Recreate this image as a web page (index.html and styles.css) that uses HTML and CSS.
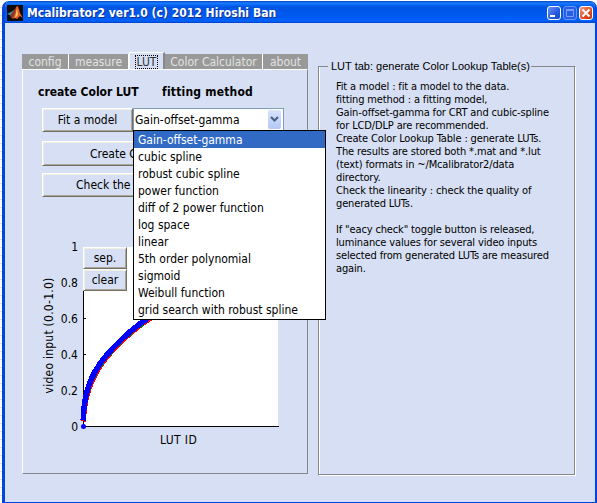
FILE: index.html
```html
<!DOCTYPE html>
<html lang="en">
<head>
<meta charset="utf-8">
<title>Mcalibrator2</title>
<link rel="stylesheet" href="styles.css">
</head>
<body>
<div class="window">
  <header class="titlebar">
    <svg class="logo" width="16" height="16" viewBox="0 0 16 16"><rect width="16" height="16" fill="#100b0b"/><path d="M0 9l4-2 3-2 2 4-4 4-2-3z" fill="#468cad"/><path d="M5 8l5-7-2 8-3 4-2-2z" fill="#8c3324"/><path d="M9 2l2-1 2 7 3 5-3-2-3 3-2-1-3 1 3-5z" fill="#e55b20"/><path d="M10 3l1 7-3 3 1-5z" fill="#ffc45a"/></svg>
    <h1 class="title">Mcalibrator2 ver1.0 (c) 2012 Hiroshi Ban</h1>
    <div class="controls">
      <span class="control"><svg width="12" height="12" viewBox="0 0 12 12"><path d="M2 9h5" stroke="#fff" stroke-width="2"/></svg></span>
      <span class="control disabled"><svg width="12" height="12" viewBox="0 0 12 12"><path d="M2.5 3.5h7v6h-7zM2 2.5h8" fill="none" stroke="#7d9ff3"/></svg></span>
      <span class="control close"><svg width="12" height="12" viewBox="0 0 12 12"><path d="M2.5 2.5l7 7m0-7l-7 7" stroke="#fff" stroke-width="2"/></svg></span>
    </div>
  </header>
  <main class="content">
    <section class="left">
      <nav class="tabs">
        <span class="tab config">config</span><span class="tab measure">measure</span><span class="tab active"><span class="focus">LUT</span></span><span class="tab calc">Color Calculator</span><span class="tab about">about</span>
      </nav>
      <div class="panel">
        <div class="headings"><b class="create">create Color LUT</b><b class="fitting">fitting method</b></div>
        <div class="model-row">
          <div class="button fit">Fit a model</div>
          <div class="combo">
            <span class="value">Gain-offset-gamma</span>
            <span class="arrow"><svg width="13" height="19" viewBox="0 0 13 19"><path d="M3 7l3.5 3.5L10 7" fill="none" stroke="#4d6185" stroke-width="2.2"/></svg></span>
            <ul class="menu">
              <li class="selected">Gain-offset-gamma</li>
              <li>cubic spline</li>
              <li>robust cubic spline</li>
              <li>power function</li>
              <li>diff of 2 power function</li>
              <li>log space</li>
              <li>linear</li>
              <li>5th order polynomial</li>
              <li>sigmoid</li>
              <li>Weibull function</li>
              <li>grid search with robust spline</li>
            </ul>
          </div>
        </div>
        <div class="button wide lut">Create C</div>
        <div class="button wide check">Check the</div>
        <div class="chart">
          <div class="ylabel"><span>video input (0.0-1.0)</span></div>
          <div class="yticks"><span>1</span><span>0.8</span><span>0.6</span><span>0.4</span><span>0.2</span><span>0</span></div>
          <div class="plot">
            <svg class="curve" width="202" height="186" viewBox="-4 -1 202 186">
              <rect x="0" y="0" width="195" height="179" fill="#fff"/>
              <path d="M.5 0v179.5H196M0 143.5h3M0 107.5h3M0 71.5h3M0 35.5h3" fill="none" stroke="#000"/>
              <g fill="none" shape-rendering="crispEdges">
                <path d="M.5 174.500C1.500 143 12 122 31.500 101.500C41.500 91 52.500 81 68.500 70.500" stroke="#f00" stroke-width="5"/>
                <path d="M.5 172C1.500 142 11.500 121 31.500 101C41.500 90.500 52.500 80.500 68.500 70.500" stroke="#008000" stroke-width="5" stroke-dasharray="5 9"/>
                <path d="M.2 173.500C.7 141 11 120 31 100C41 89.500 51.500 79.500 67.500 69.500" stroke="#00f" stroke-width="5.500"/>
              </g>
              <circle cx=".5" cy="179.500" r="2.500" fill="#00f"/>
            </svg>
            <div class="plot-buttons"><div class="button small">sep.</div><div class="button small">clear</div></div>
          </div>
        </div>
        <div class="xlabel">LUT ID</div>
      </div>
    </section>
    <fieldset class="help">
      <legend>LUT tab: generate Color Lookup Table(s)</legend>
      <div class="lines">
        <p>Fit a model : fit a model to the data.</p>
        <p>fitting method : a fitting model,</p>
        <p>Gain-offset-gamma for CRT and cubic-spline</p>
        <p>for LCD/DLP are recommended.</p>
        <p>Create Color Lookup Table : generate LUTs.</p>
        <p>The results are stored both *.mat and *.lut</p>
        <p>(text) formats in ~/Mcalibrator2/data</p>
        <p>directory.</p>
        <p>Check the linearity : check the quality of</p>
        <p>generated LUTs.</p>
        <p class="gap">If "eacy check" toggle button is released,</p>
        <p>luminance values for several video inputs</p>
        <p>selected from generated LUTs are measured</p>
        <p>again.</p>
      </div>
    </fieldset>
  </main>
</div>
</body>
</html>
```
FILE: styles.css
```css
* { box-sizing: border-box; }
body {
  margin: 0;
  height: 503px;
  padding: 1px 0 0 2px;
  overflow: hidden;
  background: repeating-linear-gradient(#fff 0 7px, #dfe1e8 7px 8px);
  font: 12px/17px "DejaVu Sans Condensed", "DejaVu Sans", sans-serif;
  font-stretch: condensed;
  color: #000;
  white-space: nowrap;
}
h1, p, ul { margin: 0; padding: 0; }
svg { display: block; }
.window {
  width: 595px;
  height: 502px;
  border: solid #0046e0;
  border-width: 0 2px 1px 3px;
  border-radius: 7px 7px 0 0;
  background: #d6dff3;
  overflow: hidden;
}
.titlebar {
  display: flex;
  align-items: center;
  height: 22px;
  margin: 0 -2px 0 -3px;
  padding: 2px 4px 0 5px;
  background: linear-gradient(#0842bd 0, #187cff 2px, #0054e3 6px, #005cf5 17px, #0061fc 20px, #0040c8 22px);
}
.title {
  margin-left: 4px;
  color: #fff;
  font-size: 12px;
  line-height: 18px;
  text-shadow: 1px 1px #10318f;
  letter-spacing: .03px;
}
.controls { display: flex; gap: 2px; margin-left: auto; }
.control {
  width: 14px;
  height: 14px;
  border: 1px solid #fff;
  border-radius: 3px;
  background: linear-gradient(135deg, #6c95f4, #2459e1 60%, #1a47c5);
}
.control.disabled { border-color: #6d92ef; background: #245ee8; }
.control.close { background: linear-gradient(135deg, #f09a7d, #df4b22 60%, #b83310); }
.content { display: flex; align-items: flex-start; padding: 29px 0 0 17px; }
.left { width: 286px; }
.tabs { display: flex; align-items: flex-end; height: 17px; }
.tab {
  height: 15px;
  line-height: 16px;
  border-right: 1px solid #fff;
  background: #999;
  color: #e2e2e2;
  text-align: center;
}
.config { width: 47px; }
.measure { width: 60px; }
.calc { width: 98px; }
.about { width: 45px; border-right: 0; }
.tab.active {
  width: 36px;
  height: 17px;
  padding: 2px 5px 0;
  border: 1px solid #fff;
  border-width: 1px 2px 0 1px;
  border-right-color: #888;
  background: #d6dff3;
  color: #333;
}
.focus { display: block; height: 14px; border: 1px dotted #000; line-height: 13px; }
.panel {
  height: 405px;
  border: 1px solid #fff;
  border-right-color: #84888c;
  border-bottom-color: #84888c;
  padding: 13px 0 0 19px;
}
.headings { display: flex; height: 25px; margin-left: -4px; line-height: 18px; }
.create { width: 124px; }
.fitting { letter-spacing: .2px; }
.model-row { display: flex; }
.button {
  height: 24px;
  border: 1px solid;
  border-color: #fff #716f64 #716f64 #fff;
  background: #d6dff3;
  box-shadow: inset 1px 1px #f1efe2, inset -1px -1px #aca899;
  text-align: center;
  line-height: 22px;
}
.fit { width: 91px; }
.combo {
  position: relative;
  display: flex;
  justify-content: space-between;
  width: 151px;
  height: 23px;
  padding: 1px 2px;
  border: 1px solid #7f9db9;
  background: #fff;
  line-height: 20px;
}
.value { margin-left: -1px; }
.arrow { width: 13px; height: 19px; border-radius: 2px; background: linear-gradient(#d8e3fd, #b4c8f6); }
.menu {
  position: absolute;
  z-index: 2;
  left: -1px;
  top: 21px;
  width: 193px;
  height: 190px;
  border: 1px solid #000;
  background: #fff;
  list-style: none;
}
.menu li { height: 17px; padding-left: 4px; line-height: 18px; }
.menu .selected { background: #316ac5; color: #fff; }
.wide { width: 242px; height: 25px; margin-top: 9px; line-height: 24px; text-align: left; }
.lut { padding-left: 47px; }
.check { height: 24px; margin-top: 7px; padding-left: 33px; line-height: 22px; }
.chart { display: flex; height: 190px; margin: 43px 0 0 -1px; }
.ylabel { display: flex; align-items: center; justify-content: center; width: 16px; height: 190px; }
.ylabel span { transform: rotate(-90deg); letter-spacing: .25px; }
.yticks { width: 21px; text-align: right; line-height: 36px; margin-top: -11px; }
.yticks span { display: block; height: 36px; }
.plot { position: relative; width: 202px; margin: 6px 0 0 1px; }
.plot-buttons { position: absolute; left: 4px; top: 1px; }
.small { width: 44px; height: 22px; line-height: 20px; }
.xlabel { width: 195px; margin: 2px 0 0 39px; text-align: center; letter-spacing: .4px; }
.help {
  width: 258px;
  height: 418px;
  margin: 6px 0 0 10px;
  padding: 0 0 0 17px;
  border: 1px solid;
  border-color: #84888c #fff #fff #84888c;
  box-shadow: inset -1px -1px #84888c, inset 1px 0 #fff;
}
.help legend {
  margin-left: -8px;
  padding: 0 1px 0 3px;
  font: 11px/16px "Liberation Sans", Arial, sans-serif;
}
.lines { margin-top: 6px; font-size: 11px; line-height: 13px; letter-spacing: -.14px; }
.gap { margin-top: 13px; }
```
